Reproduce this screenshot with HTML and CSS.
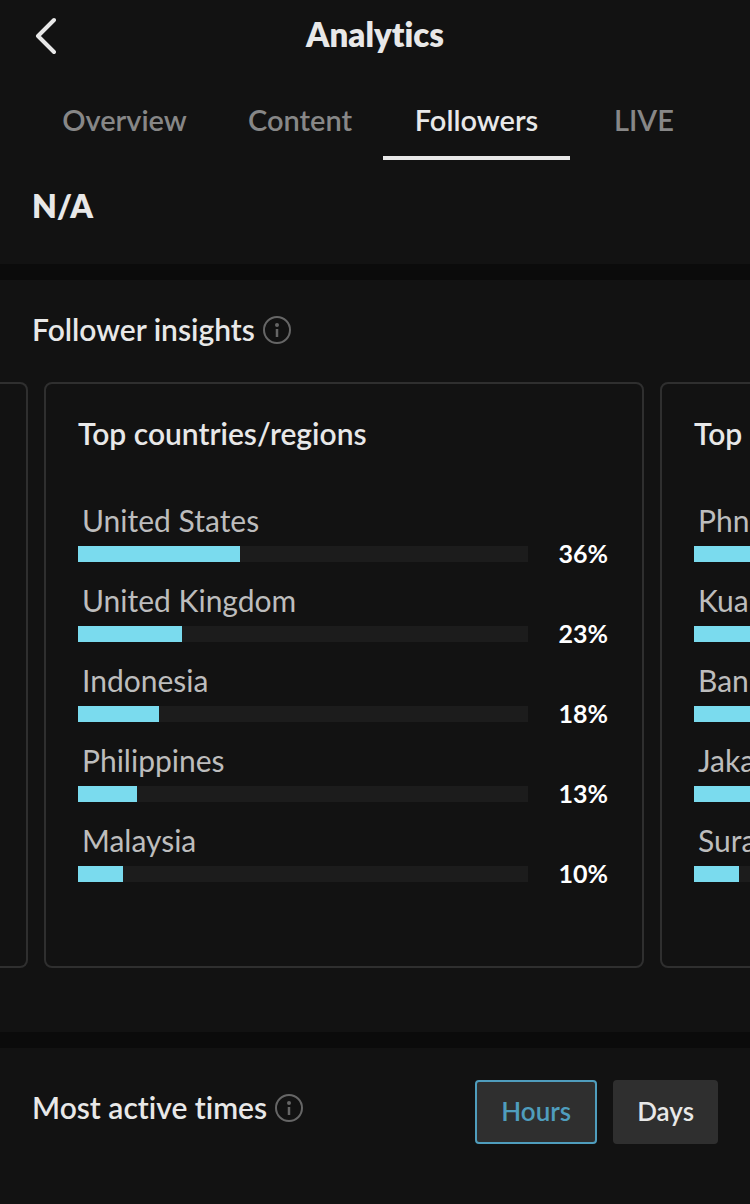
FILE: index.html
```html
<!DOCTYPE html>
<html lang="en">
<head>
    <meta charset="UTF-8">
    <meta name="viewport" content="width=device-width, initial-scale=1.0">
    <title>Analytics</title>
    <link rel="stylesheet" href="styles.css">
</head>
<body>
    <header class="header">
        <button class="back-btn" type="button" aria-label="Back">
            <svg width="24" height="40" viewBox="0 0 24 40" fill="none" stroke="currentColor" stroke-width="4" stroke-linecap="round" stroke-linejoin="round">
                <path d="M22 4L6 20L22 36"/>
            </svg>
        </button>
        <h1>Analytics</h1>
    </header>

    <nav class="nav-tabs">
        <a class="tab" href="#overview">Overview</a>
        <a class="tab" href="#content">Content</a>
        <a class="tab active" href="#followers">Followers</a>
        <a class="tab" href="#live">LIVE</a>
    </nav>

    <main>
        <section class="total">N/A</section>

        <!-- Follower insights -->
        <section class="insights">
            <div class="section-title">
                <h2>Follower insights</h2>
                <button class="info-btn" type="button" aria-label="About follower insights">
                    <svg width="28" height="28" viewBox="0 0 28 28">
                        <circle cx="14" cy="14" r="13" fill="none" stroke="currentColor" stroke-width="2"/>
                        <circle cx="14" cy="9" r="2" fill="currentColor"/>
                        <path d="M14 13V21" stroke="currentColor" stroke-width="2.5"/>
                    </svg>
                </button>
            </div>

            <div class="cards">
                <div class="card card-previous"></div>

                <article class="card">
                    <h3>Top countries/regions</h3>
                    <ul class="bar-list">
                        <li>
                            <span class="bar-label">United States</span>
                            <div class="bar-row">
                                <div class="track"><div class="fill" style="width: 36%"></div></div>
                                <span class="bar-value">36%</span>
                            </div>
                        </li>
                        <li>
                            <span class="bar-label">United Kingdom</span>
                            <div class="bar-row">
                                <div class="track"><div class="fill" style="width: 23%"></div></div>
                                <span class="bar-value">23%</span>
                            </div>
                        </li>
                        <li>
                            <span class="bar-label">Indonesia</span>
                            <div class="bar-row">
                                <div class="track"><div class="fill" style="width: 18%"></div></div>
                                <span class="bar-value">18%</span>
                            </div>
                        </li>
                        <li>
                            <span class="bar-label">Philippines</span>
                            <div class="bar-row">
                                <div class="track"><div class="fill" style="width: 13%"></div></div>
                                <span class="bar-value">13%</span>
                            </div>
                        </li>
                        <li>
                            <span class="bar-label">Malaysia</span>
                            <div class="bar-row">
                                <div class="track"><div class="fill" style="width: 10%"></div></div>
                                <span class="bar-value">10%</span>
                            </div>
                        </li>
                    </ul>
                </article>

                <article class="card">
                    <h3>Top</h3>
                    <ul class="bar-list">
                        <li>
                            <span class="bar-label">Phn</span>
                            <div class="bar-row">
                                <div class="track"><div class="fill" style="width: 30%"></div></div>
                            </div>
                        </li>
                        <li>
                            <span class="bar-label">Kua</span>
                            <div class="bar-row">
                                <div class="track"><div class="fill" style="width: 24%"></div></div>
                            </div>
                        </li>
                        <li>
                            <span class="bar-label">Ban</span>
                            <div class="bar-row">
                                <div class="track"><div class="fill" style="width: 20%"></div></div>
                            </div>
                        </li>
                        <li>
                            <span class="bar-label">Jaka</span>
                            <div class="bar-row">
                                <div class="track"><div class="fill" style="width: 16%"></div></div>
                            </div>
                        </li>
                        <li>
                            <span class="bar-label">Sura</span>
                            <div class="bar-row">
                                <div class="track"><div class="fill" style="width: 10%"></div></div>
                            </div>
                        </li>
                    </ul>
                </article>
            </div>
        </section>

        <!-- Most active times -->
        <section class="active-times">
            <div class="section-title">
                <h2>Most active times</h2>
                <button class="info-btn" type="button" aria-label="About most active times">
                    <svg width="28" height="28" viewBox="0 0 28 28">
                        <circle cx="14" cy="14" r="13" fill="none" stroke="currentColor" stroke-width="2"/>
                        <circle cx="14" cy="9" r="2" fill="currentColor"/>
                        <path d="M14 13V21" stroke="currentColor" stroke-width="2.5"/>
                    </svg>
                </button>
            </div>
            <div class="toggle">
                <button class="toggle-btn active" type="button">Hours</button>
                <button class="toggle-btn" type="button">Days</button>
            </div>
        </section>
    </main>
</body>
</html>
```
FILE: styles.css
```css
* {
    margin: 0;
    padding: 0;
    box-sizing: border-box;
}

body {
    font-family: Lato, "Open Sans", sans-serif;
    font-size: 30px;
    font-variant-ligatures: none;
    background-color: #121212;
    color: #e8e8e8;
    overflow-x: hidden;
}

button {
    font-family: inherit;
    border: none;
    background: none;
    cursor: pointer;
}

.header {
    display: grid;
    grid-template-columns: 64px 1fr 64px;
    align-items: center;
    height: 72px;
}

.header h1 {
    padding-bottom: 4px;
    font-size: 33px;
    font-weight: 800;
    text-align: center;
}

.back-btn {
    display: flex;
    justify-content: flex-end;
    padding-right: 8px;
    color: #e8e8e8;
}

.nav-tabs {
    display: grid;
    grid-template-columns: 185fr 166fr 187fr 148fr;
    padding: 0 32px;
}

.tab {
    height: 88px;
    padding-top: 28px;
    font-size: 29px;
    line-height: 40px;
    text-align: center;
    text-decoration: none;
    font-weight: 600;
    color: #878787;
    border-bottom: 4px solid transparent;
}

.tab.active {
    color: #e8e8e8;
    border-bottom-color: #e8e8e8;
}

.total {
    padding: 22px 32px 34px;
    font-size: 32px;
    line-height: 48px;
    font-weight: 800;
}

.insights {
    padding: 32px 0 64px;
    border-top: 16px solid #0b0b0b;
    border-bottom: 16px solid #0b0b0b;
}

.section-title {
    display: flex;
    align-items: center;
    gap: 8px;
}

.section-title h2 {
    padding-bottom: 2px;
    font-size: 30px;
    line-height: 34px;
    font-weight: 600;
}

.insights .section-title {
    padding: 0 32px;
    margin-bottom: 34px;
}

.info-btn {
    display: flex;
    color: #666;
}

.cards {
    display: flex;
    gap: 16px;
    overflow: hidden;
}

.card {
    flex: 0 0 80%;
    padding: 30px 32px 76px;
    border: 2px solid #2f2f2f;
    border-radius: 8px;
}

/* only the right edge of the previous card shows */
.card-previous {
    flex-basis: 28px;
    padding: 0;
    border-left: none;
    border-radius: 0 8px 8px 0;
}

.card h3 {
    font-size: 30px;
    line-height: 38px;
    font-weight: 600;
    margin-bottom: 52px;
}

.bar-list {
    display: grid;
    gap: 14px;
    list-style: none;
}

.bar-label {
    display: block;
    padding: 0 0 2px 4px;
    line-height: 32px;
    color: #bdbdbd;
}

.bar-row {
    display: grid;
    grid-template-columns: 1fr 80px;
    align-items: center;
    height: 32px;
    padding-right: 2px;
}

.track {
    height: 16px;
    background-color: #1c1c1c;
}

.fill {
    height: 100%;
    background-color: #7adbee;
}

.bar-value {
    padding-bottom: 2px;
    font-size: 25px;
    line-height: 30px;
    font-weight: 700;
    text-align: right;
    color: white;
}

.active-times {
    display: flex;
    justify-content: space-between;
    align-items: flex-start;
    padding: 32px;
}

.active-times .section-title {
    min-height: 56px;
}

.toggle {
    display: flex;
    gap: 16px;
}

.toggle-btn {
    height: 64px;
    padding: 0 24px 2px;
    font-size: 26px;
    font-weight: 600;
    color: #e8e8e8;
    background-color: #2f2f2f;
    border-radius: 4px;
}

.toggle-btn.active {
    color: #4f9dbd;
    border: 2px solid #4f9dbd;
}
```
